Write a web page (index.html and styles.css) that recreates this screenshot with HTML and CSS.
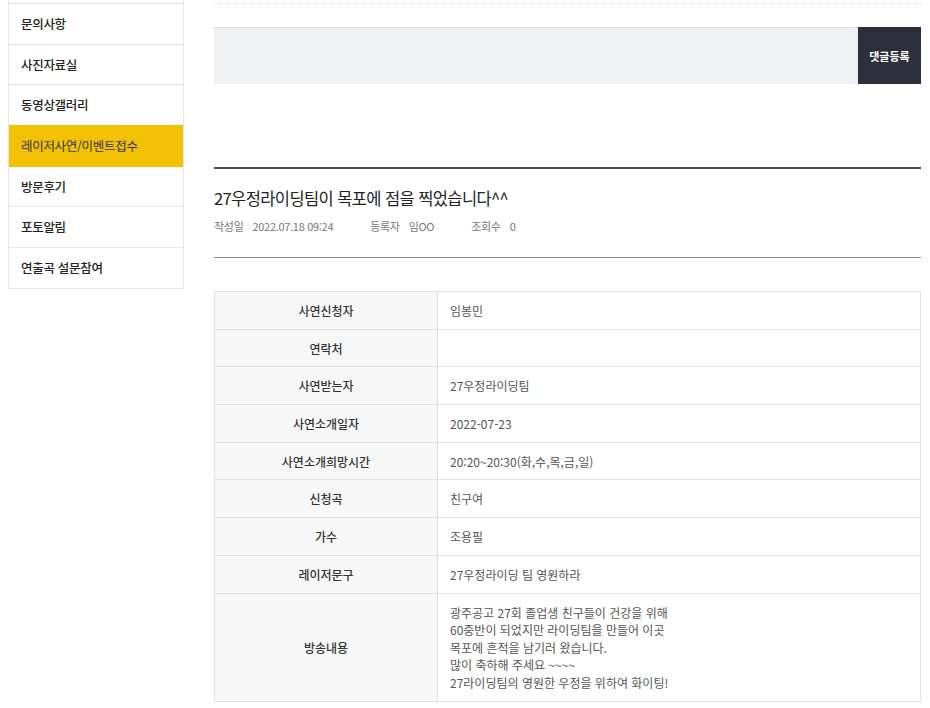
FILE: index.html
```html
<!DOCTYPE html>
<html lang="ko">
<head>
    <meta charset="UTF-8">
    <title>레이저사연/이벤트접수</title>
    <link rel="stylesheet" href="styles.css">
</head>
<body>

<div class="page">
    <div class="side">
        <ul class="sideMenu">
            <li class="sideItem">문의사항</li>
            <li class="sideItem">사진자료실</li>
            <li class="sideItem">동영상갤러리</li>
            <li class="sideItem active">레이저사연/이벤트접수</li>
            <li class="sideItem">방문후기</li>
            <li class="sideItem">포토알림</li>
            <li class="sideItem">연출곡 설문참여</li>
        </ul>
    </div>

    <div class="main">
        <div class="commentForm">
            <textarea class="commentInput"></textarea>
            <button class="commentBtn" type="button">댓글등록</button>
        </div>

        <div class="viewHead">
            <h2 class="viewTitle">27우정라이딩팀이 목포에 점을 찍었습니다^^</h2>
            <div class="viewMeta">
                <span class="metaItem"><em>작성일</em>2022.07.18 09:24</span>
                <span class="metaItem"><em>등록자</em>임OO</span>
                <span class="metaItem"><em>조회수</em>0</span>
            </div>
        </div>

        <table class="viewTable">
            <tr><th>사연신청자</th><td>임봉민</td></tr>
            <tr><th>연락처</th><td></td></tr>
            <tr><th>사연받는자</th><td>27우정라이딩팀</td></tr>
            <tr><th>사연소개일자</th><td>2022-07-23</td></tr>
            <tr><th>사연소개희망시간</th><td>20:20~20:30(화,수,목,금,일)</td></tr>
            <tr><th>신청곡</th><td>친구여</td></tr>
            <tr><th>가수</th><td>조용필</td></tr>
            <tr><th>레이저문구</th><td>27우정라이딩 팀 영원하라</td></tr>
            <tr class="longRow">
                <th>방송내용</th>
                <td>광주공고 27회 졸업생 친구들이 건강을 위해<br>
                    60중반이 되었지만 라이딩팀을 만들어 이곳<br>
                    목포에 흔적을 남기러 왔습니다.<br>
                    많이 축하해 주세요 ~~~~<br>
                    27라이딩팀의 영원한 우정을 위하여 화이팅!</td>
            </tr>
        </table>
    </div>
</div>

</body>
</html>
```

FILE: styles.css
```css
body {
    margin: 0;
    font-family: "Noto Sans CJK KR", "Noto Sans", sans-serif;
    color: #333;
    background: #fff;
}

.page {
    display: flex;
    padding-left: 8px;
}

.side {
    box-sizing: border-box;
    width: 176px;
    flex-shrink: 0;
    align-self: flex-start;
    padding-top: 3px;
    border-left: 1px solid #e6e6e6;
    border-right: 1px solid #e6e6e6;
    border-bottom: 1px solid #e6e6e6;
}

.sideMenu {
    margin: 0;
    padding: 0;
    list-style: none;
}

.sideItem {
    box-sizing: border-box;
    height: 40.7px;
    line-height: 40px;
    padding-left: 12px;
    border-top: 1px solid #e6e6e6;
    font-size: 12.5px;
    font-weight: 500;
    color: #222;
    letter-spacing: -0.3px;
}

.sideItem.active {
    background: #f2c104;
    border-top-color: #f2c104;
    font-weight: 400;
    color: #333;
}

.sideItem.active + .sideItem {
    border-top-color: #f2c104;
}

.main {
    box-sizing: border-box;
    width: 707px;
    margin-left: 30px;
    padding-top: 3px;
}

.commentForm {
    display: flex;
    height: 57px;
    padding-top: 23px;
    border-top: 1px dotted #d8d8d8;
}

.commentInput {
    flex-grow: 1;
    box-sizing: border-box;
    height: 57px;
    margin: 0;
    border: 0;
    border-top: 1px solid #dedfe3;
    background: #eef0f4;
    resize: none;
}

.commentBtn {
    width: 63px;
    height: 57px;
    border: 0;
    background: #2d2f3a;
    color: #fff;
    font-family: inherit;
    font-size: 11px;
    font-weight: 700;
}

.viewHead {
    margin-top: 83px;
    padding: 16px 0 23px;
    border-top: 2px solid #465252;
    border-bottom: 1px solid #7d8b8b;
}

.viewTitle {
    margin: 0;
    font-size: 16.5px;
    font-weight: 400;
    color: #222;
    line-height: 26px;
    letter-spacing: -0.6px;
}

.viewMeta {
    display: flex;
    margin-top: 7px;
    font-size: 11px;
    color: #777;
    line-height: 16px;
    white-space: nowrap;
    letter-spacing: -0.3px;
}

.metaItem {
    margin-right: 37px;
}

.metaItem em {
    font-style: normal;
    margin-right: 9px;
}

.viewTable {
    width: 100%;
    margin-top: 33px;
    border-collapse: collapse;
    border: 1px solid #dddddd;
    font-size: 12px;
}

.viewTable th,
.viewTable td {
    height: 36.7px;
    padding: 0;
    border: 1px solid #e2e2e2;
}

.viewTable th {
    width: 222px;
    background: #f7f7f7;
    font-weight: 500;
    color: #333;
    text-align: center;
}

.viewTable td {
    padding-left: 12px;
    color: #555;
    text-align: left;
}

.longRow td {
    height: 106px;
    line-height: 17.6px;
    padding-top: 1px;
}
```
